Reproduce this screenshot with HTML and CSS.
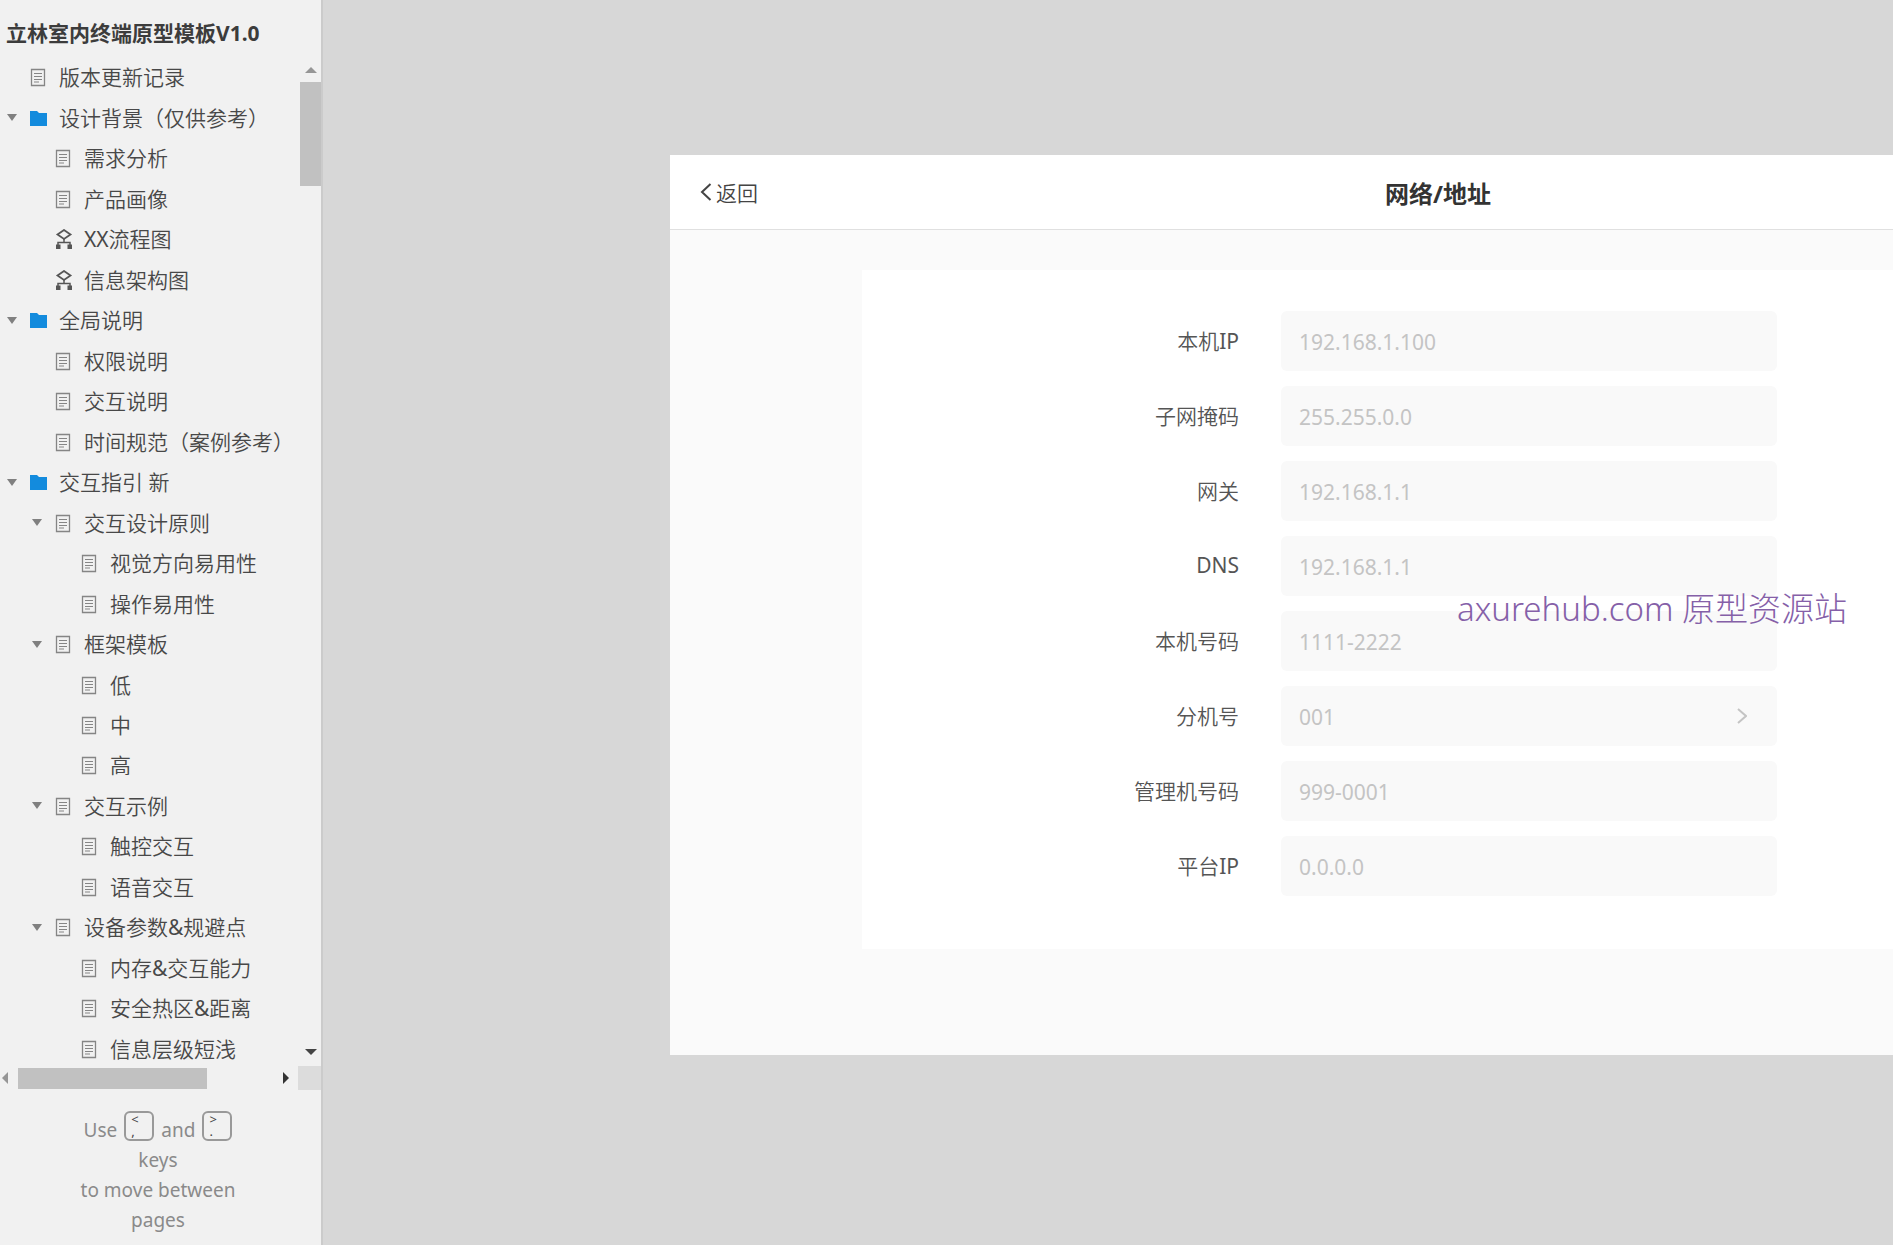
FILE: index.html
```
<!DOCTYPE html>
<html lang="zh-CN">
<head>
<meta charset="utf-8">
<title>立林室内终端原型模板V1.0</title>
<link rel="stylesheet" href="styles.css">
</head>
<body>
<svg class="sprite" aria-hidden="true">
  <symbol id="page" viewBox="0 0 18 20"><path d="M1.500 2.500h13v16h-13z" fill="none" stroke="#858585" stroke-width="1.300"/><path d="M4 6.500h8M4 9.500h8M4 12.500h8M4 15h5" stroke="#858585" fill="none"/></symbol>
  <symbol id="folder" viewBox="0 0 18 20"><path d="M0 3h7l2 2h8v13H0z" fill="#138bdd"/></symbol>
  <symbol id="flow" viewBox="0 0 18 20"><path d="M9 1l6.500 4.500L9 10 2.500 5.500z" fill="none" stroke="#555" stroke-width="1.800"/><path d="M9 10v3.500M3 16v-2.500h12V16" fill="none" stroke="#555" stroke-width="1.500"/><path d="M1 15.500h4.500V20H1zM12.500 15.500H17V20h-4.500z" fill="#555"/></symbol>
  <symbol id="arrow" viewBox="0 0 10 7"><path d="M0 0h10L5 7z" fill="#808080"/></symbol>
</svg>
<div class="layout">
  <aside class="sidebar">
    <h1 class="project">立林室内终端原型模板V1.0</h1>
    <div class="pane">
      <ul class="tree">
        <li class="row"><svg class="toggle"></svg><svg class="icon"><use href="#page"/></svg><a href="#">版本更新记录</a></li>
        <li class="row"><svg class="toggle"><use href="#arrow"/></svg><svg class="icon"><use href="#folder"/></svg><a href="#">设计背景（仅供参考）</a></li>
        <li class="row level-2"><svg class="toggle"></svg><svg class="icon"><use href="#page"/></svg><a href="#">需求分析</a></li>
        <li class="row level-2"><svg class="toggle"></svg><svg class="icon"><use href="#page"/></svg><a href="#">产品画像</a></li>
        <li class="row level-2"><svg class="toggle"></svg><svg class="icon"><use href="#flow"/></svg><a href="#">XX流程图</a></li>
        <li class="row level-2"><svg class="toggle"></svg><svg class="icon"><use href="#flow"/></svg><a href="#">信息架构图</a></li>
        <li class="row"><svg class="toggle"><use href="#arrow"/></svg><svg class="icon"><use href="#folder"/></svg><a href="#">全局说明</a></li>
        <li class="row level-2"><svg class="toggle"></svg><svg class="icon"><use href="#page"/></svg><a href="#">权限说明</a></li>
        <li class="row level-2"><svg class="toggle"></svg><svg class="icon"><use href="#page"/></svg><a href="#">交互说明</a></li>
        <li class="row level-2"><svg class="toggle"></svg><svg class="icon"><use href="#page"/></svg><a href="#">时间规范（案例参考）</a></li>
        <li class="row"><svg class="toggle"><use href="#arrow"/></svg><svg class="icon"><use href="#folder"/></svg><a href="#">交互指引 新</a></li>
        <li class="row level-2"><svg class="toggle"><use href="#arrow"/></svg><svg class="icon"><use href="#page"/></svg><a href="#">交互设计原则</a></li>
        <li class="row level-3"><svg class="toggle"></svg><svg class="icon"><use href="#page"/></svg><a href="#">视觉方向易用性</a></li>
        <li class="row level-3"><svg class="toggle"></svg><svg class="icon"><use href="#page"/></svg><a href="#">操作易用性</a></li>
        <li class="row level-2"><svg class="toggle"><use href="#arrow"/></svg><svg class="icon"><use href="#page"/></svg><a href="#">框架模板</a></li>
        <li class="row level-3"><svg class="toggle"></svg><svg class="icon"><use href="#page"/></svg><a href="#">低</a></li>
        <li class="row level-3"><svg class="toggle"></svg><svg class="icon"><use href="#page"/></svg><a href="#">中</a></li>
        <li class="row level-3"><svg class="toggle"></svg><svg class="icon"><use href="#page"/></svg><a href="#">高</a></li>
        <li class="row level-2"><svg class="toggle"><use href="#arrow"/></svg><svg class="icon"><use href="#page"/></svg><a href="#">交互示例</a></li>
        <li class="row level-3"><svg class="toggle"></svg><svg class="icon"><use href="#page"/></svg><a href="#">触控交互</a></li>
        <li class="row level-3"><svg class="toggle"></svg><svg class="icon"><use href="#page"/></svg><a href="#">语音交互</a></li>
        <li class="row level-2"><svg class="toggle"><use href="#arrow"/></svg><svg class="icon"><use href="#page"/></svg><a href="#">设备参数&amp;规避点</a></li>
        <li class="row level-3"><svg class="toggle"></svg><svg class="icon"><use href="#page"/></svg><a href="#">内存&amp;交互能力</a></li>
        <li class="row level-3"><svg class="toggle"></svg><svg class="icon"><use href="#page"/></svg><a href="#">安全热区&amp;距离</a></li>
        <li class="row level-3"><svg class="toggle"></svg><svg class="icon"><use href="#page"/></svg><a href="#">信息层级短浅</a></li>
      </ul>
      <div class="vbar">
        <svg width="12" height="6" viewBox="0 0 12 6"><path d="M0 6L6 0l6 6z" fill="#969696"/></svg>
        <div class="vthumb"></div>
        <svg class="down" width="12" height="6" viewBox="0 0 12 6"><path d="M0 0h12L6 6z" fill="#444"/></svg>
      </div>
    </div>
    <div class="hbar">
      <svg width="6" height="12" viewBox="0 0 6 12"><path d="M6 0v12L0 6z" fill="#969696"/></svg>
      <div class="hthumb"></div>
      <svg class="right" width="6" height="12" viewBox="0 0 6 12"><path d="M0 0v12l6-6z" fill="#333"/></svg>
      <div class="corner"></div>
    </div>
    <footer class="hint">
      <div class="hint-keys">Use
        <span class="key"><span>&lt;</span><span>,</span></span>
        and
        <span class="key"><span>&gt;</span><span>.</span></span>
      </div>
      keys<br>to move between<br>pages
    </footer>
  </aside>
  <main class="canvas">
    <section class="device">
      <header class="topbar">
        <button class="back" type="button"><svg width="12" height="20" viewBox="0 0 12 20"><path d="M10.500 2L2 10l8.500 8" fill="none" stroke="#444" stroke-width="2"/></svg>返回</button>
        <h2 class="title">网络/地址</h2>
      </header>
      <form class="card">
        <div class="field"><label for="ip">本机IP</label><input id="ip" placeholder="192.168.1.100"></div>
        <div class="field"><label for="mask">子网掩码</label><input id="mask" placeholder="255.255.0.0"></div>
        <div class="field"><label for="gateway">网关</label><input id="gateway" placeholder="192.168.1.1"></div>
        <div class="field"><label for="dns">DNS</label><input id="dns" placeholder="192.168.1.1"></div>
        <div class="field"><label for="number">本机号码</label><input id="number" placeholder="1111-2222"></div>
        <div class="field"><label for="ext">分机号</label><select id="ext"><option>001</option></select><svg class="chevron" width="10" height="16" viewBox="0 0 10 16"><path d="M1 1l8 7-8 7" fill="none" stroke="#c4c4c4" stroke-width="2"/></svg></div>
        <div class="field"><label for="manager">管理机号码</label><input id="manager" placeholder="999-0001"></div>
        <div class="field"><label for="platform">平台IP</label><input id="platform" placeholder="0.0.0.0"></div>
      </form>
    </section>
    <p class="watermark">axurehub.com 原型资源站</p>
  </main>
</div>
</body>
</html>
```
FILE: styles.css
```
* { box-sizing: border-box; }
body, h1, h2, p, ul { margin: 0; padding: 0; }
body, button, input, select {
  font-family: "Noto Sans", "Noto Sans CJK SC DemiLight", "Noto Sans CJK SC", sans-serif;
  font-size: 21px;
}
.sprite { position: absolute; width: 0; height: 0; }
.layout {
  display: grid;
  grid-template-columns: 323px 1fr;
  height: 100vh;
  overflow: hidden;
  background: #d7d7d7;
}

/* Sidebar */
.sidebar {
  display: flex;
  flex-direction: column;
  min-height: 0;
  background: #f1f1f1;
  border-right: 2px solid #cbcbcb;
}
.project {
  height: 57px;
  padding: 9px 0 0 6px;
  font-family: "Noto Sans", "Noto Sans CJK SC", sans-serif;
  font-size: 21px;
  line-height: 48px;
  color: #3c3c3c;
  white-space: nowrap;
}
.pane {
  display: flex;
  flex: 1;
  min-height: 0;
}
.tree {
  display: flex;
  flex: 1;
  flex-direction: column;
  margin-bottom: -2px;
  list-style: none;
}
.row {
  display: flex;
  flex: 1;
  align-items: center;
  min-height: 0;
  padding-left: 7px;
  line-height: 30px;
  white-space: nowrap;
}
.level-2 { padding-left: 32px; }
.level-3 { padding-left: 58px; }
.row a { color: #484848; text-decoration: none; }
.toggle { flex: none; width: 10px; height: 7px; margin-right: 13px; }
.icon { flex: none; width: 18px; height: 20px; margin-right: 11px; }

.vbar {
  display: flex;
  flex: none;
  flex-direction: column;
  align-items: center;
  width: 21px;
  padding: 10px 0 12px;
}
.vthumb { width: 21px; height: 104px; margin-top: 9px; background: #c1c1c1; }
.down { margin-top: auto; }
.hbar {
  display: flex;
  flex: none;
  align-items: center;
  height: 22px;
  padding-left: 2px;
}
.hthumb { width: 189px; height: 21px; margin-left: 10px; background: #c1c1c1; }
.right { margin-left: auto; }
.corner { width: 23px; height: 24px; margin-left: 9px; background: #dcdcdc; }

.hint {
  flex: none;
  padding: 26px 5px 10px 0;
  font-size: 19px;
  line-height: 30px;
  color: #8a8a8a;
  text-align: center;
}
.hint-keys {
  display: flex;
  justify-content: center;
  gap: 7px;
  height: 30px;
}
.key {
  display: flex;
  flex-direction: column;
  width: 30px;
  height: 30px;
  margin-top: -4px;
  padding-left: 5px;
  border: 2px solid #999;
  border-radius: 6px;
  font-size: 13px;
  line-height: 12px;
  color: #444;
  text-align: left;
}

/* Prototype canvas */
.canvas {
  position: relative;
  min-width: 0;
  padding: 155px 0 0 347px;
  overflow: hidden;
}
.device { width: 1536px; background: #fafafa; padding-bottom: 106px; }
.topbar {
  display: grid;
  grid-template-columns: 1fr auto 1fr;
  align-items: center;
  height: 75px;
  padding: 0 30px;
  background: #fff;
  border-bottom: 1px solid #e0e0e0;
}
.back {
  display: flex;
  align-items: center;
  justify-self: start;
  gap: 4px;
  padding: 0;
  border: 0;
  background: none;
  color: #444;
}
.title {
  font-family: "Noto Sans", "Noto Sans CJK SC", sans-serif;
  font-size: 24px;
  color: #333;
}
.card {
  display: grid;
  gap: 15px;
  margin: 40px 192px 0;
  padding: 41px 237px 53px 0;
  background: #fff;
}
.field {
  position: relative;
  display: grid;
  grid-template-columns: 1fr 496px;
  gap: 42px;
  align-items: center;
}
.field label { padding-bottom: 2px; color: #555; text-align: right; }
.field input, .field select {
  appearance: none;
  width: 100%;
  height: 60px;
  padding: 2px 18px 0;
  border: 0;
  border-radius: 6px;
  background: #f9f9f9;
  color: #c4c4c4;
}
.field input::placeholder { color: #c4c4c4; }
.chevron { position: absolute; right: 30px; top: 22px; }
.watermark {
  position: absolute;
  top: 585px;
  right: 46px;
  font-family: "Noto Sans", "Noto Sans CJK SC", sans-serif;
  font-size: 33px;
  line-height: 48px;
  font-weight: 300;
  color: #8560a8;
  white-space: nowrap;
}
```
